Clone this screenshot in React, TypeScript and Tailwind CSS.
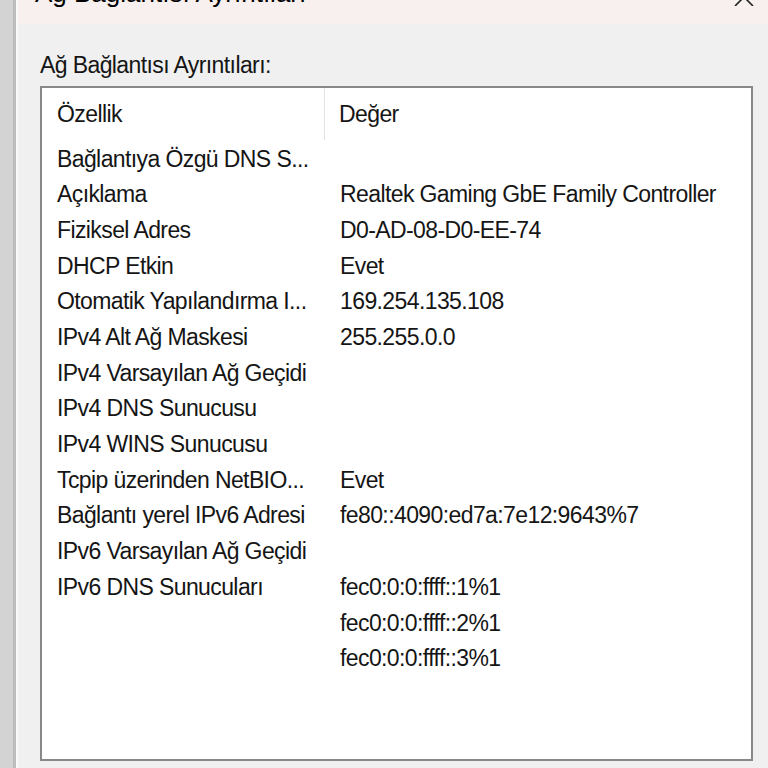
import React from "react";

const ROWS: [string, string][] = [
  ["Bağlantıya Özgü DNS S...", ""],
  ["Açıklama", "Realtek Gaming GbE Family Controller"],
  ["Fiziksel Adres", "D0-AD-08-D0-EE-74"],
  ["DHCP Etkin", "Evet"],
  ["Otomatik Yapılandırma I...", "169.254.135.108"],
  ["IPv4 Alt Ağ Maskesi", "255.255.0.0"],
  ["IPv4 Varsayılan Ağ Geçidi", ""],
  ["IPv4 DNS Sunucusu", ""],
  ["IPv4 WINS Sunucusu", ""],
  ["Tcpip üzerinden NetBIO...", "Evet"],
  ["Bağlantı yerel IPv6 Adresi", "fe80::4090:ed7a:7e12:9643%7"],
  ["IPv6 Varsayılan Ağ Geçidi", ""],
  ["IPv6 DNS Sunucuları", "fec0:0:0:ffff::1%1"],
  ["", "fec0:0:0:ffff::2%1"],
  ["", "fec0:0:0:ffff::3%1"],
];

export default function App() {
  return (
    <div className="flex h-[768px] w-[768px] overflow-hidden bg-[#f0f0f0] font-['Liberation_Sans',Arial,sans-serif] text-[23px] tracking-[-0.6px] text-[#151515]">
      {/* desktop strip on the left */}
      <div className="w-[13px] shrink-0 bg-[#d3d3d3]" />
      <div className="w-[3px] shrink-0 bg-[#bcbcbc]" />
      <div className="w-[2px] shrink-0 bg-[#fafafa]" />

      <div className="flex min-w-0 flex-1 flex-col">
        {/* title bar, cut at the top of the picture */}
        <div className="flex h-[24px] shrink-0 items-start justify-between overflow-hidden bg-[#f7f0ee] pl-[17px] pr-[13px]">
          <span className="-mt-[22px] text-[26px] leading-[30px] tracking-normal text-black">Ağ Bağlantısı Ayrıntıları</span>
          <svg className="-mt-[12px] h-[18px] w-[22px]" viewBox="0 0 22 18" fill="none" stroke="#222" strokeWidth="1.6">
            <path d="M2 0 L20 18 M20 0 L2 18" />
          </svg>
        </div>

        <div className="flex flex-1 flex-col pl-[22px] pr-[15px] pb-[7px]">
          <div className="mt-[24px] h-[38px] leading-[34px]">Ağ Bağlantısı Ayrıntıları:</div>

          <div className="flex-1 border-2 border-[#888888] bg-white">
            {/* header */}
            <div className="flex h-[52px] items-center">
              <div className="flex h-full w-[283px] items-center border-r border-[#e3e3e3] pl-[15px]">Özellik</div>
              <div className="pl-[14px]">Değer</div>
            </div>
            <div className="h-[1px]" />
            {ROWS.map(([k, v], i) => (
              <div key={i} className="flex h-[35.7px] items-center">
                <div className="w-[283px] whitespace-nowrap pl-[15px]">{k}</div>
                <div className="whitespace-nowrap pl-[15px]">{v}</div>
              </div>
            ))}
          </div>
        </div>
      </div>
    </div>
  );
}
